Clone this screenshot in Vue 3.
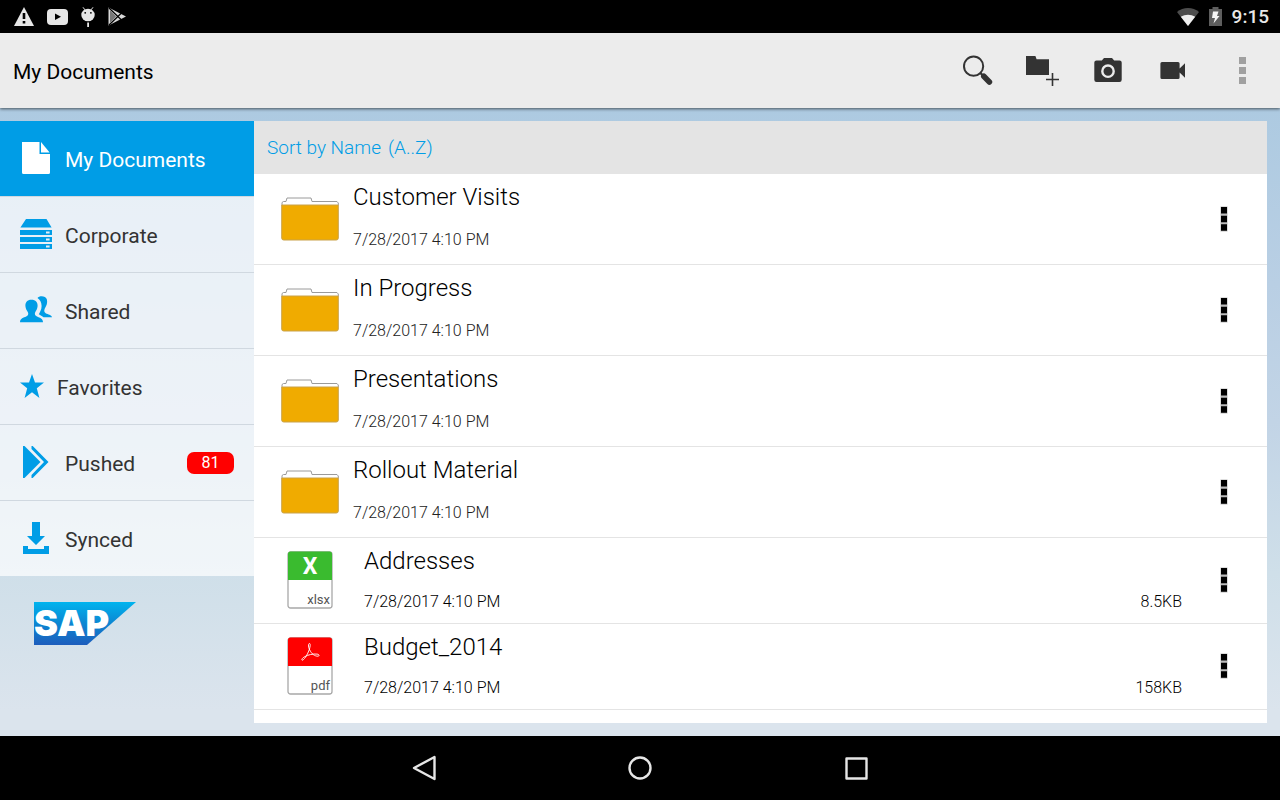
<script setup>
import { ref } from 'vue'

const sections = [
  { id: 'documents', label: 'My Documents' },
  { id: 'corporate', label: 'Corporate' },
  { id: 'shared', label: 'Shared' },
  { id: 'favorites', label: 'Favorites' },
  { id: 'pushed', label: 'Pushed', count: 81 },
  { id: 'synced', label: 'Synced' }
]

const active = ref('documents')

const entries = ref([
  { name: 'Customer Visits', type: 'folder', date: '7/28/2017 4:10 PM' },
  { name: 'In Progress', type: 'folder', date: '7/28/2017 4:10 PM' },
  { name: 'Presentations', type: 'folder', date: '7/28/2017 4:10 PM' },
  { name: 'Rollout Material', type: 'folder', date: '7/28/2017 4:10 PM' },
  { name: 'Addresses', type: 'xlsx', date: '7/28/2017 4:10 PM', size: '8.5KB' },
  { name: 'Budget_2014', type: 'pdf', date: '7/28/2017 4:10 PM', size: '158KB' }
])

const ascending = ref(true)

function onToggleSort() {
  ascending.value = !ascending.value
  entries.value.reverse()
}
</script>

<template>
  <div class="screen">
    <div class="status-bar">
      <div class="status-icons">
        <svg width="20" height="19" viewBox="0 0 20 19">
          <path d="M10 0L20 19H0Z" fill="#e6e6e6" />
          <path d="M8.700 6h2.600v6H8.700zM8.700 14h2.600v2.400H8.700z" fill="#000" />
        </svg>
        <svg width="21" height="16" viewBox="0 0 21 16">
          <rect width="21" height="16" rx="4" fill="#e6e6e6" />
          <path d="M8 4.500l6 3.300-6 3.300z" fill="#000" />
        </svg>
        <svg width="14" height="20" viewBox="0 0 14 20">
          <path d="M2 0.300l2 2.600M12 0.300l-2 2.600" stroke="#e6e6e6" stroke-width="1" />
          <ellipse cx="7" cy="8" rx="6.700" ry="6.300" fill="#e6e6e6" />
          <circle cx="4.200" cy="5.800" r="0.900" fill="#000" />
          <circle cx="9.900" cy="5.800" r="0.900" fill="#000" />
          <path d="M6.200 15.400h1.800v4.600H6.200z" fill="#e6e6e6" />
        </svg>
        <svg width="18" height="19" viewBox="0 0 18 19">
          <path d="M0.500 0.500L18 9.500 0.500 18.500Z" fill="#d8d8d8" />
          <path d="M1 1L13.500 13M1 18L13.500 6" stroke="#000" stroke-width="1.200" />
          <path d="M2 3l6 6.500-6 6.500z" fill="#777" />
        </svg>
      </div>
      <div class="status-right">
        <svg width="22" height="18" viewBox="0 0 22 18">
          <path d="M0 4C6-1.300 16-1.300 22 4L11 18Z" fill="#4d4d4d" />
          <path d="M3.800 8.800C8 5.900 14 5.900 18.200 8.800L11 18Z" fill="#f0f0f0" />
        </svg>
        <svg width="13" height="19" viewBox="0 0 13 19">
          <path d="M3.500 0h6v2H13v17H0V2h3.500z" fill="#5e5e5e" />
          <path d="M4 4.500h5.500L8 9h2.500L4.500 16.500 6 11H3z" fill="#f5f5f5" />
        </svg>
        <span class="clock">9:15</span>
      </div>
    </div>

    <header class="app-bar">
      <h1 class="title">My Documents</h1>
      <div class="actions">
        <button class="action" type="button" aria-label="Search">
          <svg width="32" height="32" viewBox="0 0 32 32" fill="none" stroke="#333">
            <circle cx="11.600" cy="11.200" r="9.600" stroke-width="2" />
            <path d="M18.400 18l4 4" stroke-width="2.400" />
            <path d="M21.800 21.200l5.600 5.800" stroke-width="5.600" stroke-linecap="round" />
          </svg>
        </button>
        <button class="action" type="button" aria-label="New folder">
          <svg width="34" height="32" viewBox="0 0 34 32">
            <path d="M0 1h9.400l1.200 3.300H23V20H0z" fill="#333" />
            <path d="M26.500 18v13M20 24.500h13" stroke="#333" stroke-width="1.600" />
          </svg>
        </button>
        <button class="action" type="button" aria-label="Take photo">
          <svg width="28" height="26" viewBox="0 1 28 26">
            <path
              d="M2.500 3.400h5.300L10 1h8l2.200 2.400h5.300a2.200 2.200 0 0 1 2.200 2.200v17.200a2.200 2.200 0 0 1-2.200 2.200h-23a2.200 2.200 0 0 1-2.200-2.200V5.600a2.200 2.200 0 0 1 2.200-2.200z"
              fill="#333"
            />
            <circle cx="14" cy="14.200" r="5.700" fill="#333" stroke="#ececec" stroke-width="2.400" />
          </svg>
        </button>
        <button class="action" type="button" aria-label="Record video">
          <svg width="26" height="18" viewBox="0 0 26 18">
            <path
              d="M2 0h16a1.600 1.600 0 0 1 1.600 1.600v4.900l5.400-5.200v14.400l-5.400-5.200v4.900a1.600 1.600 0 0 1-1.600 1.600H2a1.600 1.600 0 0 1-1.600-1.600V1.600A1.600 1.600 0 0 1 2 0z"
              fill="#333"
            />
          </svg>
        </button>
        <button class="action action-more" type="button" aria-label="More options">
          <svg width="7" height="27" viewBox="0 0 7 27">
            <path d="M0 0h7v7H0zM0 10h7v7H0zM0 20h7v7H0z" fill="#a0a0a0" />
          </svg>
        </button>
      </div>
    </header>

    <div class="content">
      <aside class="sidebar">
        <nav class="sections">
          <a
            v-for="section in sections"
            :key="section.id"
            class="section"
            :class="{ 'section-active': active === section.id }"
            :href="'#' + section.id"
            @click.prevent="active = section.id"
          >
            <svg v-if="section.id === 'documents'" class="section-icon" width="32" height="32" viewBox="0 0 32 32">
              <path d="M2 0h17.500v12H30v18.500a1.500 1.500 0 0 1-1.500 1.500h-25A1.500 1.500 0 0 1 2 30.500z" />
              <path d="M21 0l8.600 10.600H21z" />
            </svg>
            <svg v-else-if="section.id === 'corporate'" class="section-icon" width="32" height="32" viewBox="0 0 32 32">
              <path d="M6 1h20.500L31.600 9.400H0.400zM0 12h32v5H0zM0 19h32v5H0zM0 26h32v5H0z" />
              <path d="M26 13.600h3.600v1.800H26zM26 20.600h3.600v1.800H26zM26 27.600h3.600v1.800H26z" fill="#e6eef5" />
            </svg>
            <svg v-else-if="section.id === 'shared'" class="section-icon" width="32" height="32" viewBox="0 0 32 32">
              <path
                d="M17.500 4C19 1.600 25.600 1.300 26.900 5.500 27.700 9 26.600 11.500 24.800 14.600c-.9 1.900-.7 3.700.9 4.700 2.500 1.400 5.600 1.400 6.300 3.900H23.500c-1.800-1.500-3.800-2-4.700-2.900 1-1.900 2.800-4.500 2.800-8.300 0-3.500-1.600-6.300-4.100-8z"
              />
              <path
                d="M11.400 5.800c4.300 0 6.400 2.600 6.200 6.200-.2 3-1.500 4.600-2.500 6.500-.7 2 .2 3.200 1.900 4.100 2.700 1.300 6 1.900 6 5.700H0c.2-4 3.600-4.500 6.200-5.700 1.700-.9 2.500-2.200 1.800-4.100-1-1.900-2.400-3.500-2.600-6.500-.2-3.600 1.800-6.200 6-6.200z"
              />
            </svg>
            <svg v-else-if="section.id === 'favorites'" class="section-icon" width="24" height="24" viewBox="0 0 24 24">
              <path d="M12 0l3 8.600h9l-7.200 5.600L19.400 24 12 18.300 4.600 24l2.600-9.800L0 8.600h9z" />
            </svg>
            <svg v-else-if="section.id === 'pushed'" class="section-icon" width="32" height="32" viewBox="0 0 32 32">
              <path d="M3 0h1.500L20.500 16 4.500 32H3z" />
              <path d="M11.500 0h1.200L28.500 16 12.700 32h-1.200v-3L24 16 11.500 3z" />
            </svg>
            <svg v-else class="section-icon" width="32" height="32" viewBox="0 0 32 32">
              <path d="M12 0h8v14h5l-9 9-9-9h5zM3 24h5v3h16v-3h5v8H3z" />
            </svg>
            <span class="section-label">{{ section.label }}</span>
            <span v-if="section.count" class="badge">{{ section.count }}</span>
          </a>
        </nav>
        <svg class="logo" width="102" height="43" viewBox="0 0 102 43" role="img" aria-label="SAP">
          <defs>
            <linearGradient id="logo-fill" x1="0" y1="0" x2="0" y2="1">
              <stop offset="0" stop-color="#00b4ee" />
              <stop offset="0.5" stop-color="#0c86d2" />
              <stop offset="1" stop-color="#1d5dbc" />
            </linearGradient>
          </defs>
          <path d="M0 0h102L53 43H0z" fill="url(#logo-fill)" />
          <text class="logo-text" x="0" y="34">SAP</text>
        </svg>
      </aside>

      <main class="panel">
        <button class="sort" type="button" @click="onToggleSort">
          <span>Sort by Name</span>
          <span>{{ ascending ? '(A..Z)' : '(Z..A)' }}</span>
        </button>
        <ul class="entries">
          <li
            v-for="entry in entries"
            :key="entry.name"
            class="entry"
            :class="entry.type === 'folder' ? 'entry-folder' : 'entry-file'"
          >
            <svg v-if="entry.type === 'folder'" width="58" height="44" viewBox="0 0 58 44">
              <path
                d="M1 8V5.500L2.500 4.500H5l1-3.500h24l1 3.500h25l1.300 1.500V8"
                fill="#fff"
                stroke="#9a9a9a"
                stroke-width="1"
              />
              <path d="M0.700 8h56.600v33a2 2 0 0 1-2 2H2.700a2 2 0 0 1-2-2z" fill="#f0ab00" stroke="#c9a24a" stroke-width="1" />
            </svg>
            <svg v-else width="46" height="58" viewBox="0 0 46 58">
              <rect x="1" y="1" width="44" height="56" rx="2.500" fill="#fff" stroke="#a8a8a8" stroke-width="1.300" />
              <path
                d="M1 29V3a2.500 2.500 0 0 1 2.500-2.500h39A2.500 2.500 0 0 1 45 3v26z"
                :fill="entry.type === 'xlsx' ? '#3abb2f' : '#ff0000'"
              />
              <text v-if="entry.type === 'xlsx'" class="file-letter" x="23" y="23">X</text>
              <path
                v-else
                d="M22.500 6.500c-1.500 0-1.300 3.500.2 6.500 2 4 5 6.300 8.400 6.200 1.600-.2 1.200-1.900-1-2.100-4-.5-9.300.8-12.500 2.600-2.800 1.500-3.300 3.600-2.200 3.500 2.300-.5 6.800-8.700 7.500-12.900.5-2.300.4-3.800-.4-3.800z"
                fill="none"
                stroke="#fff"
                stroke-opacity="0.9"
                stroke-width="1"
              />
              <text class="file-ext" x="43" y="53">{{ entry.type }}</text>
            </svg>
            <div class="entry-text">
              <div class="entry-name">{{ entry.name }}</div>
              <div class="entry-meta">
                <span>{{ entry.date }}</span>
                <span v-if="entry.size">{{ entry.size }}</span>
              </div>
            </div>
            <button class="entry-more" type="button" :aria-label="'Options for ' + entry.name">
              <svg width="8" height="26" viewBox="0 0 8 26">
                <path d="M0.500 0.500h7v25h-7z" fill="#bbb" />
                <path d="M1 1h6v6.500H1zM1 9.700h6v6.500H1zM1 18.200h6v6.500H1z" fill="#000" />
              </svg>
            </button>
          </li>
        </ul>
      </main>
    </div>

    <div class="nav-bar">
      <button class="nav-button" type="button" aria-label="Back">
        <svg width="26" height="26" viewBox="0 0 26 26">
          <path d="M23.500 2v22L3 13z" />
        </svg>
      </button>
      <button class="nav-button" type="button" aria-label="Home">
        <svg width="26" height="26" viewBox="0 0 26 26">
          <circle cx="13" cy="13" r="10.500" />
        </svg>
      </button>
      <button class="nav-button" type="button" aria-label="Recent apps">
        <svg width="26" height="26" viewBox="0 0 26 26">
          <rect x="3.500" y="3.500" width="20" height="20" />
        </svg>
      </button>
    </div>
  </div>
</template>

<style>
body {
  margin: 0;
  background-color: #000;
}
</style>

<style scoped>
.screen {
  display: flex;
  flex-direction: column;
  min-height: 100vh;
  font-family: Roboto, sans-serif;
  color: #000;
}

button {
  box-sizing: border-box;
  margin: 0;
  padding: 0;
  border: none;
  background: none;
  font-family: inherit;
  cursor: pointer;
}

svg {
  display: block;
  flex: none;
}

.status-bar {
  display: flex;
  justify-content: space-between;
  align-items: center;
  height: 33px;
  padding: 0 11px 0 14px;
  background-color: #000;
}

.status-icons,
.status-right {
  display: flex;
  align-items: center;
}

.status-icons {
  gap: 13px;
}

.status-right {
  gap: 10px;
}

.clock {
  color: #e8e8e8;
  font-size: 19px;
  font-weight: 500;
  line-height: 24px;
}

.app-bar {
  display: flex;
  justify-content: space-between;
  height: 75px;
  background-color: #ececec;
  box-shadow: 0 1px 3px rgba(0, 0, 0, 0.6);
  z-index: 1;
}

.title {
  margin: 0;
  padding: 27px 0 0 13px;
  font-size: 21px;
  font-weight: 400;
  line-height: 25px;
}

.actions {
  display: flex;
}

.action {
  display: flex;
  justify-content: center;
  align-items: center;
  width: 65px;
}

.action-more {
  width: 75px;
}

.content {
  display: flex;
  flex: 1;
  padding: 13px 13px 13px 0;
  background: linear-gradient(to bottom, #adcae1 0%, #b9cfe4 28%, #c2d4e6 50%, #cfdfe9 74%, #dbe4ed 96%);
}

.sidebar {
  flex: none;
  width: 254px;
}

.sections {
  display: flex;
  flex-direction: column;
  background-color: rgba(255, 255, 255, 0.7);
}

.section {
  display: flex;
  align-items: center;
  gap: 13px;
  height: 75px;
  padding: 0 20px;
  border-bottom: 1px solid #d0d8e0;
  color: #333;
  font-size: 21px;
  text-decoration: none;
}

.section:last-child {
  border-bottom: none;
}

.section-active {
  background-color: #009de6;
  color: #fff;
}

.section-icon {
  padding-bottom: 2px;
  fill: #009de6;
}

.section-active .section-icon {
  fill: #fff;
}

.section-label {
  flex: 1;
  padding-top: 2px;
}

.badge {
  width: 47px;
  border-radius: 7px;
  background-color: #f00;
  color: #fff;
  font-size: 16px;
  line-height: 22px;
  text-align: center;
}

.logo {
  margin: 26px 0 0 34px;
  overflow: visible;
}

.logo-text {
  fill: #fff;
  font-family: Inter, sans-serif;
  font-size: 36px;
  font-weight: 900;
}

.panel {
  flex: 1;
  background-color: #fff;
}

.sort {
  display: flex;
  align-items: center;
  gap: 7px;
  width: 100%;
  height: 53px;
  padding: 0 13px;
  background-color: #e4e4e4;
  color: #009de6;
  font-size: 19px;
  font-weight: 300;
}

.entries {
  margin: 0;
  padding: 0;
  list-style: none;
}

.entry {
  display: flex;
  align-items: center;
  border-bottom: 1px solid #e4e4e4;
  font-weight: 300;
}

.entry-folder {
  height: 90px;
  padding-left: 27px;
}

.entry-file {
  height: 83px;
  padding: 0 0 2px 33px;
}

.entry-text {
  display: flex;
  flex: 1;
  flex-direction: column;
}

.entry-folder .entry-text {
  gap: 19px;
  padding: 0 0 5px 14px;
}

.entry-file .entry-text {
  gap: 17px;
  padding: 0 0 1px 31px;
}

.entry-name {
  font-size: 24px;
  line-height: 28px;
}

.entry-meta {
  display: flex;
  justify-content: space-between;
  font-size: 16px;
  line-height: 20px;
}

.entry-folder .entry-meta {
  color: #222;
}

.entry-more {
  display: flex;
  justify-content: center;
  align-items: center;
  align-self: stretch;
  width: 85px;
  padding-right: 2px;
}

.file-letter {
  fill: #fff;
  font-size: 23px;
  font-weight: 700;
  text-anchor: middle;
}

.file-ext {
  fill: #555;
  font-size: 13px;
  font-weight: 400;
  text-anchor: end;
}

.nav-bar {
  display: flex;
  justify-content: center;
  height: 64px;
  background-color: #000;
}

.nav-button {
  display: flex;
  justify-content: center;
  align-items: center;
  width: 216px;
}

.nav-button svg {
  fill: none;
  stroke: #e6e6e6;
  stroke-width: 2.4;
  stroke-linejoin: round;
}
</style>
